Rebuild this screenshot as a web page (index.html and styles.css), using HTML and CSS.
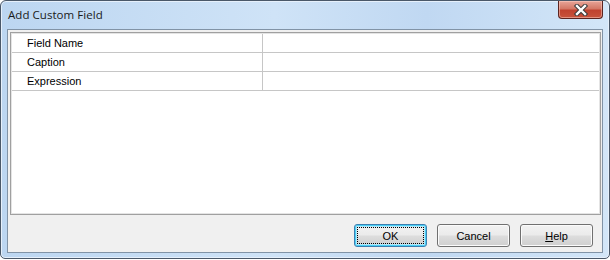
FILE: index.html
```html
<!DOCTYPE html>
<html lang="en">

<head>
    <meta charset="UTF-8">
    <title>Add Custom Field</title>
    <link rel="stylesheet" href="styles.css">
</head>

<body>
    <div class="window">
        <div class="titlebar">
            <span class="title">Add Custom Field</span>
            <div class="close">
                <svg width="18" height="12" viewBox="0 0 18 12">
                    <path d="M5 2 L13 10 M13 2 L5 10" stroke="#3a3a3a" stroke-width="4.4" stroke-linecap="square" fill="none"/>
                    <path d="M5 2 L13 10 M13 2 L5 10" stroke="#ffffff" stroke-width="2.4" stroke-linecap="square" fill="none"/>
                </svg>
            </div>
        </div>

        <div class="client">
            <div class="grid">
                <div class="row">
                    <div class="cell name">Field Name</div>
                    <div class="cell value"></div>
                </div>
                <div class="row">
                    <div class="cell name">Caption</div>
                    <div class="cell value"></div>
                </div>
                <div class="row">
                    <div class="cell name">Expression</div>
                    <div class="cell value"></div>
                </div>
            </div>

            <div class="buttons">
                <button class="btn default"><span class="focus">OK</span></button>
                <button class="btn">Cancel</button>
                <button class="btn"><u>H</u>elp</button>
            </div>
        </div>
    </div>
</body>

</html>
```

FILE: styles.css
```css
html,
body {
    margin: 0;
    padding: 0;
    background: #ffffff;
    font-family: "Liberation Sans", Arial, sans-serif;
}

.window {
    box-sizing: border-box;
    width: 610px;
    height: 259px;
    display: flex;
    flex-direction: column;
    padding: 0 6px 5px 6px;
    border: 1px solid #4a5869;
    border-radius: 6px 6px 5px 5px;
    background: linear-gradient(to right, #bcd6f1 0%, #cfe3f7 45%, #c0d8f2 70%, #d3e6f8 100%);
    box-shadow: inset 0 0 0 1px #e6f0fb;
}

.titlebar {
    height: 28px;
    display: flex;
    align-items: flex-start;
}

.title {
    margin: 6px 0 0 1px;
    font-family: "Open Sans", "Liberation Sans", sans-serif;
    font-size: 11.5px;
    color: #1a1a1a;
    letter-spacing: 0.05px;
}

.close {
    margin-left: auto;
    width: 45px;
    height: 18px;
    box-sizing: border-box;
    border: 1px solid #5b2420;
    border-top: none;
    border-radius: 0 0 4px 4px;
    background: linear-gradient(to bottom, #e8a598 0%, #d47866 45%, #c0422f 55%, #c7533c 100%);
    box-shadow: inset 0 0 0 1px rgba(255, 210, 200, 0.5);
    display: flex;
    align-items: center;
    justify-content: center;
}

.client {
    flex: 1;
    display: flex;
    flex-direction: column;
    border: 1px solid #8193a6;
    background: #f0f0f0;
    padding: 2px 1px 0 2px;
}

.grid {
    flex: 1;
    background: #ffffff;
    border: 1px solid #a0a0a0;
    box-shadow: inset 0 0 0 1px #e4e4e4;
    padding: 1px;
}

.row {
    display: flex;
    height: 18px;
    border-bottom: 1px solid #c6c6c6;
}

.cell {
    font-size: 11px;
    line-height: 18px;
    color: #000000;
}

.name {
    width: 235px;
    padding-left: 15px;
    border-right: 1px solid #c6c6c6;
}

.value {
    flex: 1;
}

.buttons {
    display: flex;
    justify-content: flex-end;
    gap: 10px;
    padding: 9px 8px 5px 0;
}

.btn {
    width: 73px;
    height: 23px;
    padding: 0;
    border: 1px solid #707070;
    border-radius: 3px;
    background: linear-gradient(to bottom, #f2f2f2 0%, #ebebeb 48%, #dddddd 52%, #cfcfcf 100%);
    box-shadow: inset 0 0 0 1px #fbfbfb;
    font-family: "Liberation Sans", Arial, sans-serif;
    font-size: 11px;
    color: #000000;
    display: flex;
    align-items: center;
    justify-content: center;
}

.default {
    border-color: #3c7fb1;
    box-shadow: inset 0 0 0 1px #48d0f5, inset 0 0 0 2px #b9e6f8;
    padding: 2px;
}

.focus {
    flex: 1;
    align-self: stretch;
    display: flex;
    align-items: center;
    justify-content: center;
    outline: 1px dotted #000000;
    outline-offset: -1px;
}
```
